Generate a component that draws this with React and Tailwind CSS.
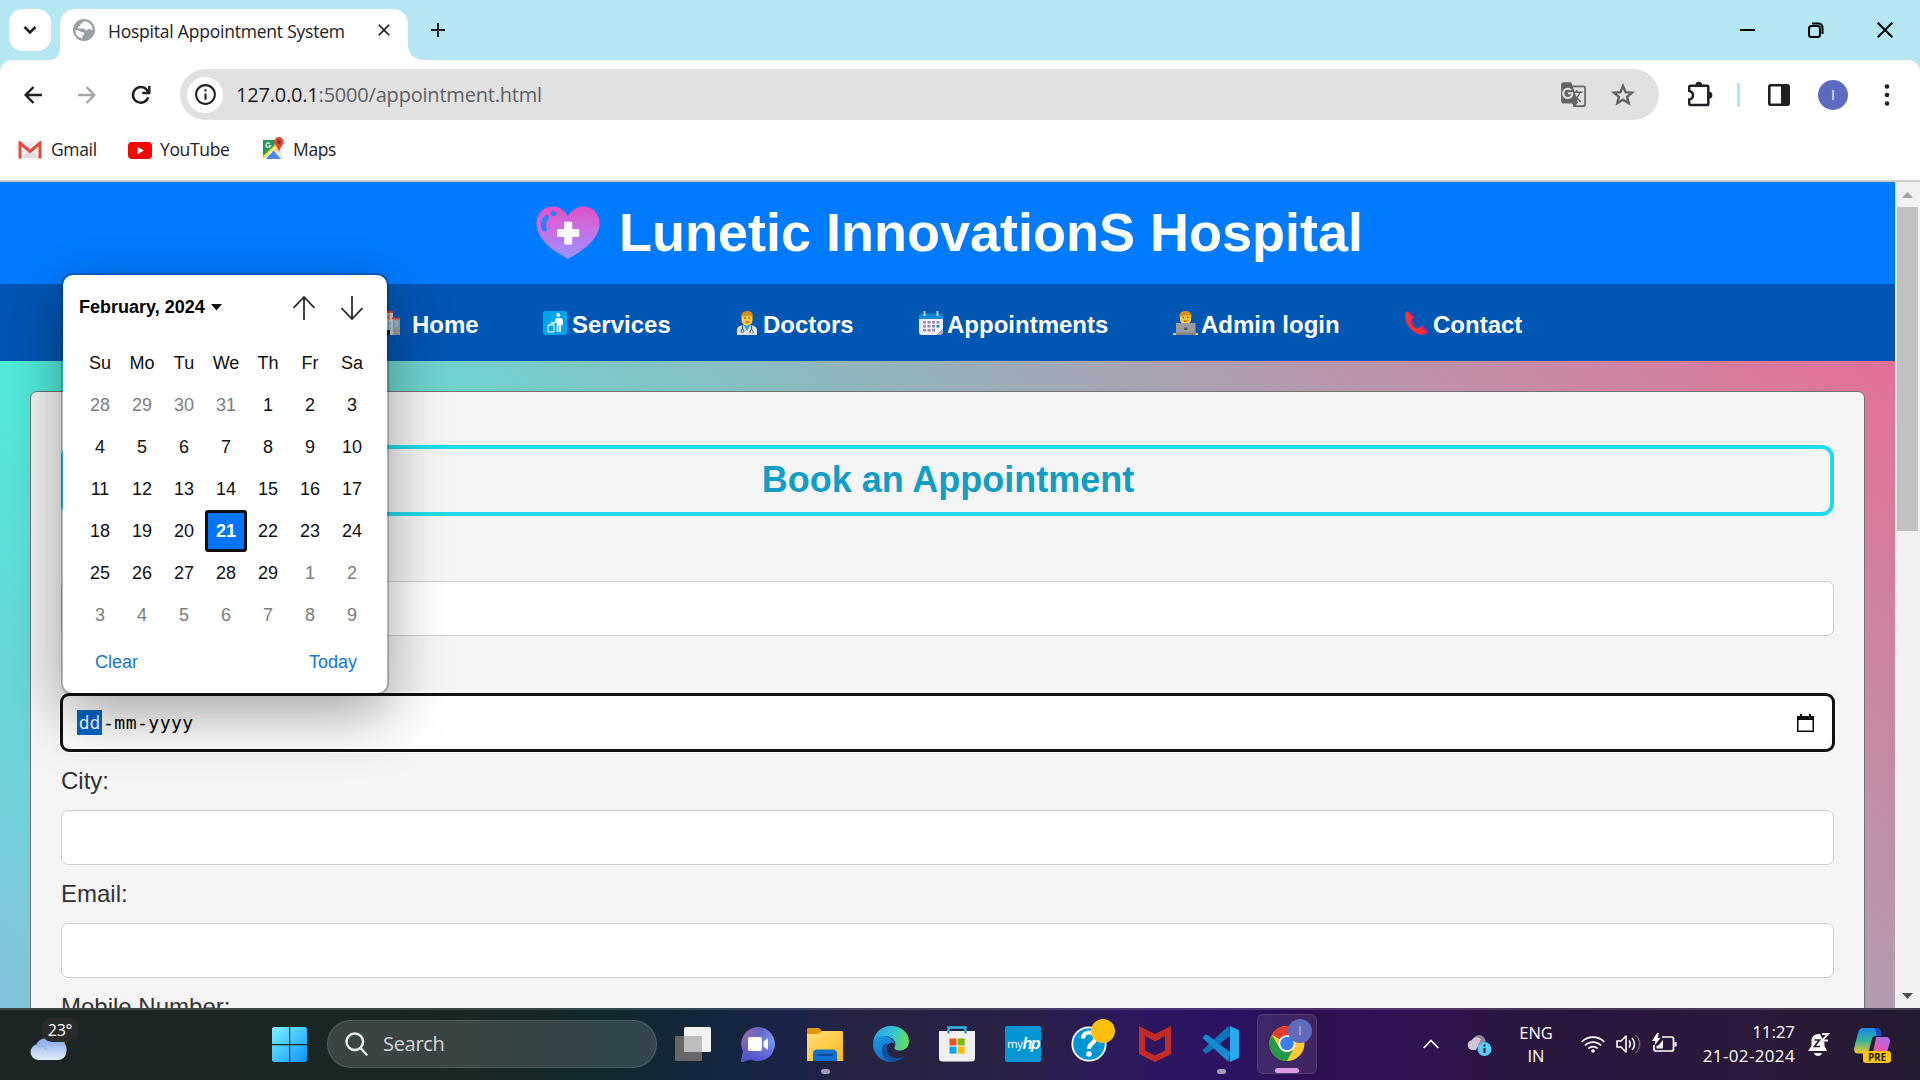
import React from "react";
import { MdInfoOutline, MdGTranslate, MdClose, MdAdd } from "react-icons/md";

const UI = "font-['Open_Sans','Noto_Sans',sans-serif]";

/* ---------- browser chrome ---------- */

function GlobeIcon() {
  return (
    <svg className="mb-[9px] ml-[1px]" width="22" height="22" viewBox="0 0 22 22">
      <circle cx="11" cy="11" r="11" fill="#9aa0a6" />
      <path d="M11.500 2.300c-2 .4-1.500 1.700-3 2.200-1.700.5-.6 2.400-2.400 2.700-1.600.3-1.400 2.300.4 2.300h4c1.500 0 1.300 1.800 2.800 1.800 1.600 0 1.500-1.500 3-1.300 1.200.2 1.500 1.200 3.400 1A8.800 8.800 0 0 0 11.500 2.300z" fill="#fff" opacity=".95" />
      <path d="M2.300 11.500c2-.7 3.700.2 5 1 1.500 1 3.700.3 4 2 .2 1.500-1.800 1.500-1.800 3 0 .9.200 1.600-.1 2.100A8.800 8.800 0 0 1 2.300 11.500z" fill="#fff" opacity=".95" />
    </svg>
  );
}

function TabStrip() {
  return (
    <div className="flex h-[60px] items-end bg-[#b5e8f2]">
      <div className="mb-[9px] ml-[9px] flex h-[42px] w-[42px] items-center justify-center rounded-[14px] bg-white">
        <svg width="14" height="10" viewBox="0 0 14 10" fill="none" stroke="#1f2023" strokeWidth="2.6">
          <path d="M1.500 2l5.500 5.500L12.500 2" />
        </svg>
      </div>
      <svg className="h-3 w-[9px]" viewBox="0 0 9 12">
        <path d="M9 0v12H0C6 11 9 7 9 0z" fill="#fff" />
      </svg>
      <div className="flex h-[51px] w-[348px] items-center rounded-t-[15px] bg-white pl-[12px]">
        <GlobeIcon />
        <span className="mb-[6px] ml-[13px] w-[250px] whitespace-nowrap text-[17.5px] tracking-[-0.22px] text-[#1f2023]">
          Hospital Appointment System
        </span>
        <MdClose className="mb-[9px] ml-[16px] h-[20px] w-[20px] text-[#1f2023]" />
      </div>
      <svg className="h-[15px] w-[15px]" viewBox="0 0 15 15">
        <path d="M0 0v15h15C6 14 0 9 0 0z" fill="#fff" />
      </svg>
      <MdAdd className="mb-[18px] ml-[3px] h-[24px] w-[24px] text-[#1f2023]" />
      <div className="mb-[22px] ml-auto mr-[27px] flex items-center gap-[53px]">
        <span className="h-[2px] w-[15px] bg-black" />
        <svg width="16" height="16" viewBox="0 0 16 16" fill="none" stroke="#000" strokeWidth="2">
          <rect x="1" y="4" width="11" height="11" rx="2.500" />
          <path d="M4 1.500h6.500a4.500 4.500 0 0 1 4 4.500V12" />
        </svg>
        <svg width="16" height="16" viewBox="0 0 16 16" stroke="#000" strokeWidth="2">
          <path d="M.7.7l14.600 14.600M15.300.7L.7 15.300" />
        </svg>
      </div>
    </div>
  );
}

function Toolbar() {
  return (
    <div className="bg-[#b5e8f2]">
      <div className="flex h-[69px] items-center rounded-t-[12px] bg-white">
        <svg className="ml-[24px]" width="18" height="18" viewBox="0 0 18 18" fill="none" stroke="#1f2023" strokeWidth="2.500">
          <path d="M18 9H2M9.500 1L1.700 9l7.800 8" />
        </svg>
        <svg className="ml-[36px]" width="18" height="18" viewBox="0 0 18 18" fill="none" stroke="#a6a6a6" strokeWidth="2.500">
          <path d="M0 9h16M8.500 1l7.800 8-7.800 8" />
        </svg>
        <svg className="ml-[35px]" width="20" height="20" viewBox="0 0 20 20" fill="none" stroke="#1f2023" strokeWidth="2.500">
          <path d="M17.200 12.300A7.800 7.800 0 1 1 15.700 4.800L18 7.300" />
          <path d="M18.300 1v7h-7" />
        </svg>
        <div className="ml-[29px] flex h-[51px] w-[1479px] items-center rounded-full bg-[#e1e1e1] pl-[7px]">
          <span className="flex h-[36px] w-[36px] items-center justify-center rounded-full bg-white">
            <MdInfoOutline className="h-[25px] w-[25px] text-[#1f2023]" />
          </span>
          <span className="ml-[13px] whitespace-nowrap text-[20px] tracking-[-0.2px] text-[#5f6063]">
            <span className="text-[#1f2023]">127.0.0.1</span>:5000/appointment.html
          </span>
          <MdGTranslate className="ml-auto h-[27px] w-[27px] text-[#616366]" />
          <svg className="ml-[24px] mr-[24px]" width="24" height="23" viewBox="0 0 24 23" fill="none" stroke="#616366" strokeWidth="2.400">
            <path d="M12 3l2.600 6.200 6.500.5-5 4.200 1.600 6.300-5.700-3.500-5.700 3.500 1.600-6.300-5-4.200 6.500-.5z" />
          </svg>
        </div>
        <svg className="mb-[1px] ml-[29px]" width="25" height="26" viewBox="0 0 25 26">
          <path d="M2.500 4.700h16.500c.8 0 1.300.5 1.300 1.300v16.700c0 .8-.5 1.300-1.300 1.300H2.500c-.8 0-1.300-.5-1.300-1.300v-4.200c5-.8 5-7.700 0-8.500V6c0-.8.500-1.300 1.300-1.300z" fill="none" stroke="#1f2023" strokeWidth="2.500" />
          <path d="M7.500 4a3.300 3.300 0 0 1 6.600 0zM21 10.800a3.400 3.400 0 0 1 0 6.800z" fill="#1f2023" />
        </svg>
        <span className="ml-[24px] h-[24px] w-[3px] bg-[#b5e8f2]" />
        <svg className="ml-[28px]" width="22" height="22" viewBox="0 0 22 22">
          <rect x="1.300" y="1.300" width="19.400" height="19.400" rx="1.500" fill="none" stroke="#1f2023" strokeWidth="2.600" />
          <path d="M13 1h8v20h-8z" fill="#1f2023" />
        </svg>
        <span className="ml-[28px] flex h-[30px] w-[30px] items-center justify-center rounded-full bg-[#5c6bc0] text-[14px] text-white">
          I
        </span>
        <svg className="ml-[36px]" width="6" height="22" viewBox="0 0 6 22" fill="#1f2023">
          <circle cx="3" cy="2.500" r="2.300" />
          <circle cx="3" cy="11" r="2.300" />
          <circle cx="3" cy="19.500" r="2.300" />
        </svg>
      </div>
    </div>
  );
}

function Bookmarks() {
  const text = "mb-[2px] text-[17.5px] whitespace-nowrap tracking-[-0.35px] text-[#1f2023]";
  return (
    <div className="box-border flex h-[53px] items-center border-b-2 border-[#cdcdcd] bg-white pb-[9px]">
      <div className="flex w-[109px] items-center pl-[18px]">
        <svg width="24" height="18" viewBox="0 0 24 18">
          <rect x="1" y="1" width="22" height="16" fill="#eceff1" />
          <path d="M3 17l9-8 9 8z" fill="#dadde0" />
          <path d="M2 17.500V2l10 8.500L22 2v15.500" fill="none" stroke="#e14a3e" strokeWidth="3" />
        </svg>
        <span className={"ml-[9px] " + text}>Gmail</span>
      </div>
      <div className="flex w-[133px] items-center pl-[19px]">
        <svg width="24" height="17" viewBox="0 0 24 17">
          <rect width="24" height="17" rx="4" fill="#f00" />
          <path d="M9.500 4.800v7.400l6.500-3.700z" fill="#fff" />
        </svg>
        <span className={"ml-[8px] " + text}>YouTube</span>
      </div>
      <div className="flex items-center pl-[20px]">
        <svg className="mb-[3px]" width="22" height="23" viewBox="0 0 22 23">
          <path d="M1 3h19v19H1z" fill="#e9eaec" />
          <path d="M1 3h13L11 12 1 21z" fill="#1c9c57" />
          <path d="M1 19L14 7l3 4L5 22H1z" fill="#fdd835" />
          <path d="M3 22l8-9 8 9z" fill="#4a8af4" />
          <path d="M2.500 22L14 10" stroke="#fff" strokeWidth="1.300" />
          <path d="M7.800 6.500A2.300 2.300 0 1 0 8.500 8.700H6.500" fill="none" stroke="#fff" strokeWidth="1.200" />
          <path d="M17 0a4.700 4.700 0 0 1 4.700 4.800C21.700 8.500 17.800 9 17 16c-.8-7-4.700-7.500-4.700-11.200A4.700 4.700 0 0 1 17 0z" fill="#e84335" />
          <circle cx="17" cy="5" r="1.800" fill="#7d211c" />
        </svg>
        <span className={"ml-[9px] " + text}>Maps</span>
      </div>
    </div>
  );
}

/* ---------- web page ---------- */

function HeartIcon() {
  return (
    <svg width="64" height="54" viewBox="0 0 64 54">
      <defs>
        <linearGradient id="heart" x1="0" y1="0" x2="0" y2="1">
          <stop offset="0" stopColor="#e24fc8" />
          <stop offset=".35" stopColor="#cf68dc" />
          <stop offset="1" stopColor="#9a93ff" />
        </linearGradient>
      </defs>
      <path d="M32 53C18 45 .5 34 .5 17.500.5 7 8 .5 16.500.5 24 .5 29.500 5 32 10.500 34.500 5 40 .5 47.500.5 56 .5 63.500 7 63.500 17.500 63.500 34 46 45 32 53z" fill="url(#heart)" />
      <circle cx="17.500" cy="7.500" r="2.800" fill="#2a80f5" />
      <path d="M10.500 11.500C7.200 14.500 6.500 18 8.200 23" fill="none" stroke="#2a80f5" strokeWidth="5" strokeLinecap="round" />
      <path d="M29 16.500h6.500v7.300h7v6.400h-7v7.600H29v-7.600h-7v-6.400h7z" fill="#fff" stroke="#fff" strokeWidth="1.500" strokeLinejoin="round" />
    </svg>
  );
}

function HospitalIcon() {
  return (
    <svg width="25" height="24" viewBox="0 0 25 24">
      <path d="M0 8h9v16H0zM17 7h8v17h-8z" fill="#9c9fa5" />
      <path d="M6 1h12v23H6z" fill="#c9ccd0" />
      <path d="M6 0h12v2H6zM17 6.500h8v1.800h-8zM0 6.500h6v1.800H0z" fill="#f03a3a" />
      <path d="M10 3v6M14 3v6M10 6h4" stroke="#f4702d" strokeWidth="1.500" />
      <path d="M8 11h3v4H8zM13 11h3v4h-3zM20 10h3v6h-3zM8 16h3v3H8zM13 16h3v3h-3z" fill="#7dc3f5" />
      <path d="M10 19h5v5h-5z" fill="#222" />
    </svg>
  );
}

function LitterIcon() {
  return (
    <svg width="24" height="24" viewBox="0 0 24 24">
      <rect width="24" height="24" rx="3" fill="#00a5ef" />
      <circle cx="15.300" cy="4" r="2" fill="#fff" />
      <path d="M13 7h4.500c1.500 0 2.300 1 2.300 2.300V14h-1.400v-3.500L18 21h-1.800v-6.500h-.8V21h-1.800V10.500L11.500 13 8 11.500l.6-1 2.600 1z" fill="#fff" />
      <path d="M5 14h6v7H5zM6 14l4-2" fill="none" stroke="#fff" strokeWidth="1" />
    </svg>
  );
}

function DoctorIcon() {
  return (
    <svg width="20" height="24" viewBox="0 0 20 24">
      <path d="M0 24v-5c0-3 3-4.500 7-5h6c4 .5 7 2 7 5v5z" fill="#dfe2ea" />
      <path d="M6.500 14h7L10 20z" fill="#24a0e0" />
      <rect x="4.500" y="2" width="11" height="12.500" rx="5" fill="#ffc83d" />
      <path d="M4 7C4 2 6.500 0 10.500 0S16 2.500 16 7l-1-2.500-9 .5z" fill="#d98f16" />
      <circle cx="8" cy="7" r=".8" fill="#5b3a1c" />
      <circle cx="12.200" cy="7" r=".8" fill="#5b3a1c" />
      <path d="M8.500 11h3.500" stroke="#d43b32" strokeWidth="1.300" />
      <path d="M5.500 14.500V19M14.500 14.500V19" stroke="#4a5563" strokeWidth="1.300" />
      <circle cx="5.500" cy="20" r="1.500" fill="none" stroke="#4a5563" />
      <path d="M13 22v-2l1.500-1.300L16 20v2" fill="none" stroke="#4a5563" />
    </svg>
  );
}

function CalendarEmoji() {
  return (
    <svg width="24" height="24" viewBox="0 0 24 24">
      <path d="M0 6h24v12l-6 6H3c-2 0-3-1-3-3z" fill="#f1ecf7" />
      <path d="M24 18v3c0 2-1 3-3 3h-3z" fill="#b8afc6" />
      <path d="M0 8V5c0-1.700 1-2.500 2.500-2.500h19C23 2.500 24 3.300 24 5v3z" fill="#0f8ad0" />
      <path d="M5.500 0v5M18.500 0v5" stroke="#d9d4e4" strokeWidth="1.800" />
      <g fill="#998ea4">
        <path d="M4 10h3v2.500H4zM8.500 10h3v2.500h-3zM13 10h3v2.500h-3zM17.500 10h3v2.500h-3zM4 14h3v2.500H4zM8.500 14h3v2.500h-3zM13 14h3v2.500h-3zM4 18h3v2.500H4zM8.500 18h3v2.500h-3zM13 18h3v2.500h-3z" />
      </g>
      <path d="M17.500 14h3v2.500h-3z" fill="#0f8ad0" />
    </svg>
  );
}

function TechIcon() {
  return (
    <svg width="25" height="24" viewBox="0 0 25 24">
      <path d="M3 22v-5c0-2 3-4 6-4h7c3 0 6 2 6 4v5z" fill="#f2a91c" />
      <rect x="7" y="1.500" width="11" height="12" rx="5" fill="#ffc83d" />
      <path d="M6.500 6.500C6 2 8.500 0 12.500 0s6.500 2 6 6.500L17 4.500l-9 .5z" fill="#d9901c" />
      <circle cx="10.500" cy="6.500" r=".8" fill="#5b3a1c" />
      <circle cx="14.600" cy="6.500" r=".8" fill="#5b3a1c" />
      <path d="M10.800 10h3.500" stroke="#d43b32" strokeWidth="1.300" />
      <path d="M3 12h19.500v10H3z" fill="#9b9b9b" />
      <path d="M0 22h25v2H0z" fill="#ffc83d" />
      <path d="M3 21.500h19.500V24H3z" fill="#858585" />
      <path d="M11 16.500h3.500V19H11z" fill="#62566e" />
    </svg>
  );
}

function PhoneEmoji() {
  return (
    <svg width="24" height="24" viewBox="0 0 24 24">
      <path d="M3 0l6.500 6L7 9.500l6 8 4-3.500 7 7-3 2.500L3 8z" fill="#b8228a" />
      <path d="M2.500 0L7.500 7 5.500 10c1 3 4 6.500 6.500 7.500l3.500-1.500 6 5.500C20 24 16 24.500 12 22.500 5 19 0 11.500 0 5 0 2.500 1 .8 2.500 0z" fill="#fb2f36" />
    </svg>
  );
}

function NavItem({ icon, label, className }) {
  return (
    <div className={"flex items-center " + className}>
      {icon}
      <span className="mt-[3px] whitespace-nowrap text-[24px] font-bold text-white">{label}</span>
    </div>
  );
}

function SiteNav() {
  return (
    <nav className="flex h-[77px] shrink-0 items-center bg-[#0056b3] pl-[375px] pt-px">
      <NavItem className="w-[168px] gap-[12px]" icon={<HospitalIcon />} label="Home" />
      <NavItem className="w-[194px] gap-[5px]" icon={<LitterIcon />} label="Services" />
      <NavItem className="w-[182px] gap-[6px]" icon={<DoctorIcon />} label="Doctors" />
      <NavItem className="w-[254px] gap-[4px]" icon={<CalendarEmoji />} label="Appointments" />
      <NavItem className="w-[232px] gap-[3px]" icon={<TechIcon />} label="Admin login" />
      <NavItem className="gap-[4px]" icon={<PhoneEmoji />} label="Contact" />
    </nav>
  );
}

const FIELD = "box-border h-[55px] rounded-[7px] border border-[#ccc] bg-white";
const LABEL = "flex h-[58px] items-center text-[24px] text-[#333]";

function DateField() {
  return (
    <div className="-mx-px flex h-[59px] items-center rounded-[9px] border-[3px] border-[#111] bg-white pl-[14px] pr-[18px] font-['DejaVu_Sans_Mono',monospace] text-[18px] text-black shadow-[0_0_0_1px_#fff]">
      <span className="flex h-[25px] w-[25px] items-center justify-center bg-[#0067c8] text-white">dd</span>
      <span className="ml-[1px] tracking-[0.5px]">-mm-yyyy</span>
      <svg className="ml-auto" width="17" height="18" viewBox="0 0 17 18">
        <path d="M3 0h2v2h7V0h2v2h3v16H0V2h3z" fill="#0b0b0b" />
        <path d="M1.500 6h14v10.500h-14z" fill="#fff" />
      </svg>
    </div>
  );
}

function BookingForm() {
  return (
    <section className="flex-1 bg-[linear-gradient(45deg,#8abbd8_0%,#4fedda_28.600%,#e57097_100%)] pl-[30px] pr-[30px] pt-[30px]">
      <div className="flex h-[700px] flex-col rounded-[7px] border border-[#717171] bg-[#f5f5f5] px-[30px]">
        <h2 className="mt-[53px] flex h-[71px] shrink-0 items-center justify-center rounded-[12px] border-4 border-[#20dcee] pb-[2px] pl-px text-[36px] font-bold text-[#119dc4]">
          Book an Appointment
        </h2>
        <div className="mt-[65px]">
          <div className={FIELD} />
          <div className="mt-[57px]">
            <DateField />
          </div>
          <div className={LABEL}>City:</div>
          <div className={FIELD} />
          <div className={LABEL}>Email:</div>
          <div className={FIELD} />
          <div className={LABEL}>Mobile Number:</div>
        </div>
      </div>
    </section>
  );
}

const WEEKS = [
  [28, 29, 30, 31, 1, 2, 3],
  [4, 5, 6, 7, 8, 9, 10],
  [11, 12, 13, 14, 15, 16, 17],
  [18, 19, 20, 21, 22, 23, 24],
  [25, 26, 27, 28, 29, 1, 2],
  [3, 4, 5, 6, 7, 8, 9],
];

function DatePicker() {
  return (
    <div className="absolute left-[61px] top-[91px] h-[422px] w-[328px] rounded-[12px] border-2 border-black/25 bg-white bg-clip-padding text-[18px] shadow-[0_20px_60px_rgba(0,0,0,0.36)]">
      <div className="flex h-[67px] items-center pb-[3px] pl-[16px]">
        <span className="whitespace-nowrap font-bold text-black">February, 2024</span>
        <svg className="ml-[6px]" width="11" height="7" viewBox="0 0 11 7">
          <path d="M0 0h11L5.500 6.500z" fill="#101010" />
        </svg>
        <svg className="ml-auto mt-[2px]" width="22" height="24" viewBox="0 0 22 24" fill="none" stroke="#222" strokeWidth="1.700">
          <path d="M11 24V1M.5 12L11 1l10.500 11" />
        </svg>
        <svg className="ml-[26px] mr-[24px] mt-[2px]" width="22" height="24" viewBox="0 0 22 24" fill="none" stroke="#222" strokeWidth="1.700">
          <path d="M11 0v23M.5 12L11 23l10.500-11" />
        </svg>
      </div>
      <div className="ml-[16px] grid w-[294px] grid-cols-7">
        {["Su", "Mo", "Tu", "We", "Th", "Fr", "Sa"].map((d) => (
          <span key={d} className="flex h-[42px] items-center justify-center text-[#101010]">
            {d}
          </span>
        ))}
        {WEEKS.map((week, w) =>
          week.map((day, i) => {
            const outside = (w === 0 && day > 7) || (w > 3 && day < 10);
            const selected = w === 3 && day === 21;
            return (
              <span
                key={w + "-" + i}
                className={
                  "flex h-[42px] items-center justify-center " +
                  (selected
                    ? "rounded-[3px] border-[3px] border-[#101010] bg-[#0075ff] font-bold text-white"
                    : outside
                      ? "text-[#7d7d7d]"
                      : "text-[#101010]")
                }
              >
                {day}
              </span>
            );
          })
        )}
      </div>
      <div className="flex h-[52px] items-center justify-between pl-[32px] pr-[30px] text-[#1474d4]">
        <span>Clear</span>
        <span>Today</span>
      </div>
    </div>
  );
}

function Scrollbar() {
  return (
    <div className="flex w-[25px] flex-col items-center bg-[#f1f1f1]">
      <span className="flex h-[25px] items-center">
        <svg width="11" height="6" viewBox="0 0 11 6">
          <path d="M5.500 0L11 6H0z" fill="#a3a3a3" />
        </svg>
      </span>
      <span className="h-[324px] w-[21px] bg-[#c1c1c1]" />
      <span className="mt-auto flex h-[25px] items-center">
        <svg width="11" height="6" viewBox="0 0 11 6">
          <path d="M5.500 6L11 0H0z" fill="#505050" />
        </svg>
      </span>
    </div>
  );
}

function WebPage() {
  return (
    <div className="relative flex h-[826px] overflow-hidden font-['Liberation_Sans',Arial,sans-serif]">
      <div className="flex h-full w-[1895px] flex-col">
        <header className="flex h-[102px] shrink-0 items-center bg-[#007bff] pl-[536px]">
          <HeartIcon />
          <h1 className="mb-px ml-[19px] whitespace-nowrap text-[54px] font-bold text-white">
            Lunetic InnovationS Hospital
          </h1>
        </header>
        <SiteNav />
        <BookingForm />
      </div>
      <Scrollbar />
      <DatePicker />
    </div>
  );
}

/* ---------- taskbar ---------- */

function StartIcon() {
  return (
    <svg width="35" height="35" viewBox="0 0 35 35">
      <defs>
        <linearGradient id="win" x1="0" y1="0" x2="1" y2="1">
          <stop offset="0" stopColor="#7ef4ff" />
          <stop offset="1" stopColor="#0c92fb" />
        </linearGradient>
      </defs>
      <path d="M1.500 0H17v17H0V1.500zM18.200 0h15.300L35 1.500V17H18.200zM0 18.200h17V35H1.500L0 33.500zM18.200 18.200H35v15.300L33.500 35H18.200z" fill="url(#win)" />
    </svg>
  );
}

function WeatherIcon() {
  return (
    <svg width="37" height="26" viewBox="0 0 37 26">
      <defs>
        <linearGradient id="cloud" x1="0" y1="0" x2="0" y2="1">
          <stop offset="0" stopColor="#7fa4ea" />
          <stop offset="1" stopColor="#e3eefb" />
        </linearGradient>
      </defs>
      <circle cx="30" cy="7" r="5" fill="#f0761a" />
      <path d="M8 25a8 8 0 0 1-1.500-15.700A11 11 0 0 1 24 6a9 9 0 0 1 12.500 9.500C36.500 21 33 25 28 25z" fill="url(#cloud)" />
      <path d="M7 11c4-1 7 0 9 3" fill="none" stroke="#8fb0ee" strokeWidth="1.500" />
    </svg>
  );
}

function TaskViewIcon() {
  return (
    <svg width="36" height="35" viewBox="0 0 36 35">
      <rect x="9" y="0" width="27" height="25" rx="1.500" fill="#f3f3f3" />
      <rect x="0" y="9" width="27" height="25" rx="1.500" fill="#676767" />
      <path d="M9 9h18v16H9z" fill="#bdbdbd" />
    </svg>
  );
}

function ChatIcon() {
  const bubble = "M17 0a17 17 0 1 1-7.500 32.300L1 35c-1 0-.9-1-.7-1.500L2 24.500A17 17 0 0 1 17 0z";
  return (
    <svg className="mr-[2px]" width="34" height="35" viewBox="0 0 34 35">
      <defs>
        <linearGradient id="chat" x1="0" y1="0" x2="1" y2=".5">
          <stop offset="0" stopColor="#a866a8" />
          <stop offset=".5" stopColor="#6468c8" />
          <stop offset="1" stopColor="#7c9cf0" />
        </linearGradient>
        <linearGradient id="chatShade" x1="0" y1="0" x2="0" y2="1">
          <stop offset=".4" stopColor="#5353c9" stopOpacity="0" />
          <stop offset="1" stopColor="#5353c9" />
        </linearGradient>
      </defs>
      <path d={bubble} fill="url(#chat)" />
      <path d={bubble} fill="url(#chatShade)" />
      <rect x="7" y="10" width="14" height="14" rx="2" fill="#fff" />
      <path d="M22.500 14.500l4.500-3.500v12l-4.500-3.500z" fill="#fff" />
    </svg>
  );
}

function ExplorerIcon() {
  return (
    <svg className="mt-px" width="36" height="34" viewBox="0 0 36 34">
      <defs>
        <linearGradient id="folder" x1="0" y1="0" x2="1" y2="1">
          <stop offset="0" stopColor="#ffdf7d" />
          <stop offset="1" stopColor="#fbba16" />
        </linearGradient>
      </defs>
      <path d="M0 1.500C0 .5.700 0 1.500 0H12l3.500 3.500L12 8H0z" fill="#e09a09" />
      <path d="M0 6h11l4.500-3H34.500c1 0 1.500.6 1.500 1.500V33H0z" fill="url(#folder)" />
      <path d="M6 33v-7c0-3 1.500-4.500 4-4.500h16c2.500 0 4 1.500 4 4.500v7z" fill="#0e72ce" />
      <path d="M11 27h14" stroke="#0a4c96" strokeWidth="1.800" strokeLinecap="round" />
    </svg>
  );
}

function EdgeIcon() {
  return (
    <svg width="36" height="36" viewBox="0 0 36 36">
      <defs>
        <linearGradient id="edgeTop" x1="0" y1=".3" x2="1" y2=".5">
          <stop offset="0" stopColor="#2aa6e8" />
          <stop offset=".5" stopColor="#35c1d8" />
          <stop offset="1" stopColor="#62e05a" />
        </linearGradient>
        <linearGradient id="edgeSide" x1="0" y1="0" x2=".6" y2="1">
          <stop offset="0" stopColor="#1f9de6" />
          <stop offset="1" stopColor="#0b6bc6" />
        </linearGradient>
      </defs>
      <path d="M0 17C1 7 8 0 18 0c11 0 18 7.500 18 15 0 6-4 9.500-9 9.500-4 0-6.500-1.500-5.300-3.500 1.200-1.600 1.300-7-4.200-9.500C10 8 3 11 0 17z" fill="url(#edgeTop)" />
      <path d="M0 18C2 10.500 9 8.500 14 10.500c5 2 7.500 5 7.500 8-1.500-3-7.500-2.500-8 3C13 28 19 36 18 36 8 36 0 28 0 18z" fill="url(#edgeSide)" />
      <path d="M14.500 17.500C11 22 14 32 25 32c4 0 7-2 8-3.500C30 33 24.500 36 18 36 12 34.500 8 28 9 22c.6-2.500 3-4.500 5.500-4.500z" fill="#124f9e" />
    </svg>
  );
}

function StoreIcon() {
  return (
    <svg width="36" height="36" viewBox="0 0 36 36">
      <path d="M9.500 8V1.500h17V8" fill="none" stroke="#35b7ee" strokeWidth="2.300" />
      <path d="M0 5h36v27a3.500 3.500 0 0 1-3.500 3.500h-29A3.500 3.500 0 0 1 0 32z" fill="#f0f0f0" />
      <path d="M9.500 5v2.500M26.500 5v2.500" fill="none" stroke="#1583c2" strokeWidth="2" />
      <path d="M10.500 12.500h7v7h-7z" fill="#f25022" />
      <path d="M18.700 12.500h7v7h-7z" fill="#7fba00" />
      <path d="M10.500 20.600h7v7h-7z" fill="#00a4ef" />
      <path d="M18.700 20.600h7v7h-7z" fill="#ffb900" />
    </svg>
  );
}

function MyHpIcon() {
  return (
    <div className="flex h-[36px] w-[36px] items-center justify-center rounded-[2px] bg-[#0096d6] text-white">
      <span className="text-[11.500px] tracking-[-0.5px]">my</span>
      <span className="font-['Liberation_Sans',sans-serif] text-[16px] font-bold italic tracking-[-1.500px]">hp</span>
    </div>
  );
}

function HelpIcon() {
  return (
    <div className="relative">
      <svg width="36" height="36" viewBox="0 0 36 36">
        <circle cx="18" cy="18" r="16.700" fill="#0096d6" stroke="#fff" strokeWidth="1.800" />
        <path d="M12 12.500C12 8.500 14.500 6.500 18 6.500s6.300 2.200 6.300 5.700c0 5-6.300 5-6.300 10.800" fill="none" stroke="#fff" strokeWidth="4.200" />
        <circle cx="18" cy="28" r="2.800" fill="#fff" />
      </svg>
      <span className="absolute -top-[7px] left-[20px] h-[24px] w-[24px] rounded-full bg-[#ffbf0b]" />
    </div>
  );
}

function McAfeeIcon() {
  return (
    <svg width="32" height="36" viewBox="0 0 32 36">
      <path d="M0 0l16 8 16-8v28l-16 8-16-8zM6 10v14.500l10 5 10-5V10l-10 5.500z" fill="#c32b2b" fillRule="evenodd" />
    </svg>
  );
}

function VsCodeIcon() {
  return (
    <svg width="36" height="36" viewBox="0 0 36 36">
      <path d="M25.500 0l1.500 10L4.500 27l-2 .5L0 25.500v-2z" fill="#0b74b8" />
      <path d="M0 12.500v-2L2.500 8.700l2 .3L27 26l-1.500 10z" fill="#1389d2" />
      <path d="M27 0l9 4.300v27.400L27 36c-.8 0-1.500-.4-1.500-.4.800.3 1.500-.3 1.500-1.200V1.600C27 .8 26.300.2 25.500.5z" fill="#2aa9f3" />
    </svg>
  );
}

function ChromeIcon() {
  return (
    <svg width="36" height="36" viewBox="0 0 36 36">
      <circle cx="18" cy="18" r="18" fill="#ffcb2e" />
      <path d="M18 18L2.400 9A18 18 0 0 1 33.600 9L34 10H18z" fill="#e33b2e" />
      <path d="M2.400 9A18 18 0 0 0 18 36l7-13-7-5-8 4z" fill="#249a48" />
      <circle cx="18" cy="18" r="8.800" fill="#fff" />
      <circle cx="18" cy="18" r="7" fill="#3b7ded" />
    </svg>
  );
}

function Slot({ children, mark }) {
  return (
    <div className="flex h-full w-[66px] flex-col items-center pt-[16px]">
      <div className="flex h-[36px] items-center">{children}</div>
      {mark && <span className="mt-[7px] h-[5px] w-[9px] rounded-full bg-[#a59cb3]" />}
    </div>
  );
}

function CopilotIcon() {
  return (
    <div className="relative h-[36px] w-[37px]">
      <svg width="36" height="32" viewBox="0 0 36 32">
        <defs>
          <linearGradient id="copA" x1="0" y1="0" x2="0" y2="1">
            <stop offset="0" stopColor="#1b86e8" />
            <stop offset=".5" stopColor="#32b69a" />
            <stop offset="1" stopColor="#f4c520" />
          </linearGradient>
          <linearGradient id="copB" x1=".8" y1="0" x2=".2" y2="1">
            <stop offset="0" stopColor="#a56cf2" />
            <stop offset=".5" stopColor="#e65ab4" />
            <stop offset="1" stopColor="#ff8a5a" />
          </linearGradient>
        </defs>
        <path d="M9 0h14c3 0 4 3 4.500 8h-6c-2 0-3 1-3.500 3l-3 11c-.8 2.500-2 3.500-4.500 3.500H4c-3 0-4.500-2-3.700-6L4 5c.8-3.500 2.500-5 5-5z" fill="url(#copA)" />
        <path d="M20 0h3c3 0 4 3 4.500 8h-5c0-4-1-7-2.500-8z" fill="#1546c4" />
        <path d="M23 9h9c3.500 0 4.500 2.500 3.700 6L32 27c-.8 3-2 5-5 5H14c3 0 3.800-2 4.500-5l3-15c.4-2 .5-3 1.500-3z" fill="url(#copB)" />
      </svg>
      <span className="absolute bottom-[1px] left-[9px] flex h-[12px] w-[28px] items-center justify-center rounded-[3px] bg-[#ffc50d] text-[10px] font-bold leading-none text-[#2a1c00]">
        PRE
      </span>
    </div>
  );
}

function Tray() {
  return (
    <div className="ml-auto flex h-full items-center pb-[2px] text-[17px] leading-[24px] tracking-[-0.1px] text-white">
      <svg width="16" height="10" viewBox="0 0 16 10" fill="none" stroke="#fff" strokeWidth="1.700">
        <path d="M.7 9L8 1.500 15.300 9" />
      </svg>
      <svg className="ml-[28px] mt-[3px]" width="25" height="22" viewBox="0 0 25 22">
        <circle cx="12" cy="6.500" r="6.500" fill="#8f839c" />
        <path d="M5 15a5 5 0 0 1-.5-9.800A6 6 0 0 1 14 4l-5 11z" fill="#cdc6d3" />
        <circle cx="17.500" cy="14" r="7" fill="#5acbf6" />
        <path d="M17.500 13v5M17.500 9.500v2" stroke="#14202b" strokeWidth="2" />
      </svg>
      <div className="ml-[25px] w-[38px] text-center text-[16.500px] leading-[23px]">
        ENG
        <br />
        IN
      </div>
      <svg className="ml-[26px]" width="24" height="18" viewBox="0 0 24 18" fill="none" stroke="#fff" strokeWidth="1.700">
        <path d="M.7 7a15.500 15.500 0 0 1 22.600 0M4 10.500a11 11 0 0 1 16 0M7.300 13.500a6.700 6.700 0 0 1 9.400 0" />
        <circle cx="12" cy="16" r="1.800" fill="#fff" stroke="none" />
      </svg>
      <svg className="ml-[11px]" width="25" height="20" viewBox="0 0 25 20" fill="none" stroke="#fff" strokeWidth="1.600">
        <path d="M1 7h4l5-5v16l-5-5H1z" strokeLinejoin="round" />
        <path d="M13 6.500c1.500 2 1.500 5 0 7M16 4c3.300 3.300 3.300 8.700 0 12" />
        <path d="M19.500 1c5.500 5 5.500 13 0 18" stroke="#6c5b78" />
      </svg>
      <svg className="mb-[2px] ml-[11px]" width="25" height="20" viewBox="0 0 25 20" fill="none" stroke="#fff" strokeWidth="1.700">
        <path d="M10 4h9.500a2 2 0 0 1 2 2v10a2 2 0 0 1-2 2H4a2 2 0 0 1-2-2v-4" />
        <path d="M23.500 9v4.500" strokeWidth="2.200" />
        <path d="M4.500 15.500h6.500V7L7 12l-2.500 1z" fill="#fff" stroke="none" />
        <path d="M5 0L0 8h3.500L2.500 12.500 8.500 5H5.500L7 0z" fill="#fff" stroke="none" />
      </svg>
      <div className="ml-[22px] flex w-[96px] flex-col items-end whitespace-nowrap">
        <span>11:27</span>
        <span className="tracking-[0.35px]">21-02-2024</span>
      </div>
      <svg className="ml-[13px]" width="22" height="24" viewBox="0 0 22 24">
        <path d="M11 2c-5 0-7.500 3-7.500 7v5L0 19h19l-2.500-5v-3L12 2z" fill="#fff" />
        <path d="M6 21h8c-.5 2-2 3-4 3s-3.500-1-4-3z" fill="#fff" />
        <path d="M6.500 8h5l-5 6.500h5.500" fill="none" stroke="#2b1a3c" strokeWidth="1.700" />
        <path d="M14 2h6l-6 6.500h6" fill="none" stroke="#fff" strokeWidth="1.800" />
      </svg>
      <div className="ml-[24px] mr-[29px] mt-[3px]">
        <CopilotIcon />
      </div>
    </div>
  );
}

function Taskbar() {
  return (
    <footer className="flex h-[72px] flex-col bg-[linear-gradient(90deg,#1c2523_0%,#1a2725_24%,#12282c_31%,#15263f_38%,#1a234a_41%,#272440_45%,#2a2046_53%,#2d1660_60%,#2c1263_64%,#2e1150_69%,#2f1356_72%,#2b163f_79%,#2a1938_92%,#241a30_100%)]">
      <div className="h-[2px] bg-white/15" />
      <div className="flex h-[70px]">
        <div className="w-[272px] pl-[30px]">
          <div className="relative h-full w-[50px]">
            <div className="pt-[25px]">
              <WeatherIcon />
            </div>
            <span className="absolute left-[12px] top-[8px] flex h-[24px] w-[36px] items-center justify-center rounded-[10px] bg-[#2b2b2d] text-[16px] tracking-[-0.2px] text-white">
              23°
            </span>
          </div>
        </div>
        <div className="pt-[17px]">
          <StartIcon />
        </div>
        <div className="ml-[20px] mt-[10px] flex h-[48px] w-[330px] items-center rounded-full border border-white/15 bg-white/[0.14] pl-[17px] text-[20px] tracking-[-0.3px] text-[#d3d7d7]">
          <svg width="23" height="24" viewBox="0 0 23 24" fill="none" stroke="#efefef" strokeWidth="2.500">
            <circle cx="9.800" cy="9.800" r="8.300" />
            <path d="M15.500 16l6 6.500" strokeLinecap="round" />
          </svg>
          <span className="ml-[15px]">Search</span>
        </div>
        <div className="ml-[3px] flex">
          <Slot>
            <TaskViewIcon />
          </Slot>
          <Slot>
            <ChatIcon />
          </Slot>
          <Slot mark>
            <ExplorerIcon />
          </Slot>
          <Slot>
            <EdgeIcon />
          </Slot>
          <Slot>
            <StoreIcon />
          </Slot>
          <Slot>
            <MyHpIcon />
          </Slot>
          <Slot>
            <HelpIcon />
          </Slot>
          <Slot>
            <McAfeeIcon />
          </Slot>
          <Slot mark>
            <VsCodeIcon />
          </Slot>
          <div className="relative ml-[3px] mt-[4px] flex h-[60px] w-[60px] flex-col items-center rounded-[6px] border border-white/10 bg-white/[0.09] pt-[11px]">
            <ChromeIcon />
            <span className="mt-[7px] h-[5px] w-[24px] shrink-0 rounded-full bg-[#dd9ce4]" />
            <span className="absolute left-[30px] top-[4px] flex h-[24px] w-[24px] items-center justify-center rounded-full bg-[#5f6bbd] text-[12px] text-[#c5cbe8]">
              I
            </span>
          </div>
        </div>
        <Tray />
      </div>
    </footer>
  );
}

export default function App() {
  return (
    <div className={"h-[1080px] w-[1920px] overflow-hidden bg-white " + UI}>
      <TabStrip />
      <Toolbar />
      <Bookmarks />
      <WebPage />
      <Taskbar />
    </div>
  );
}
